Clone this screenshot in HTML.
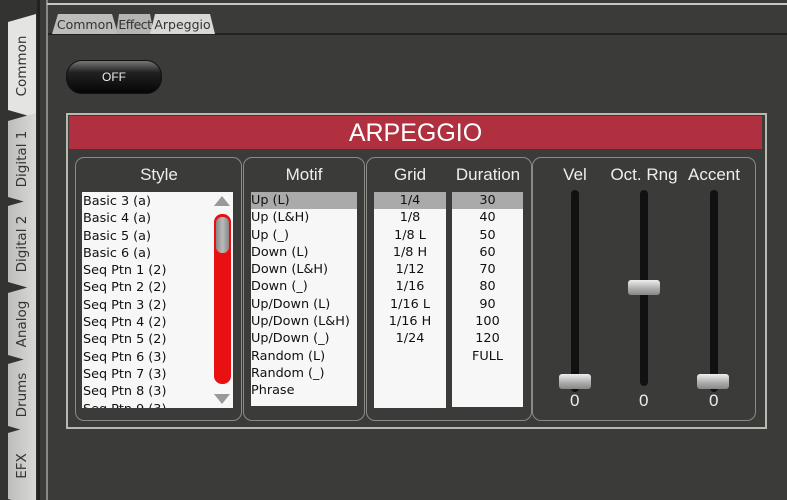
<!DOCTYPE html>
<html style="width:787px;height:500px;overflow:hidden"><head><style>
body{margin:0;width:787px;height:500px;background:#3b3b39;position:relative;overflow:hidden;font-family:"DejaVu Sans","Liberation Sans",sans-serif}
.a{position:absolute}
.vt{position:absolute;left:8px;width:28px;background:linear-gradient(90deg,#bdbdbb,#d8d8d6);border-radius:8px 0 0 8px;clip-path:polygon(0 8px,100% 0,100% 100%,0 calc(100% - 8px))}
.vt span{position:absolute;left:50%;top:50%;transform:translate(-50%,-50%) rotate(-90deg);font-size:13.5px;color:#333;white-space:nowrap}
.panel{position:absolute;border:1.5px solid #8a8a86;border-radius:9px;top:157px;height:262px}
.h{position:absolute;color:#eee;font-family:"Liberation Sans",sans-serif;font-size:17px;text-align:center}
.list{position:absolute;background:#f7f7f7;font-size:12.8px;line-height:17.3px;color:#111;overflow:hidden}
.sel{background:#aaa}
.track{position:absolute;width:8px;background:#111;border-radius:4px;top:190px;height:202px}
.knob{position:absolute;width:32px;height:15px;border-radius:3px;background:linear-gradient(#eee,#aaa 60%,#888);}
.val{position:absolute;color:#eee;font-size:17px;font-family:"Liberation Sans",sans-serif;top:391px}
.tt{position:absolute;top:14px;height:20px;font-size:12.5px;color:#333;text-align:center;line-height:22px}
</style></head><body>
<div class="a" style="left:0;top:0;width:40px;height:500px;background:#333331"></div>
<div class="vt" style="top:14px;height:104px;background:#e4e4e2"><span>Common</span></div>
<div class="vt" style="top:113px;height:92px"><span>Digital 1</span></div>
<div class="vt" style="top:198px;height:92px"><span>Digital 2</span></div>
<div class="vt" style="top:285px;height:78px"><span>Analog</span></div>
<div class="vt" style="top:356px;height:78px"><span>Drums</span></div>
<div class="vt" style="top:425px;height:82px"><span>EFX</span></div>
<div class="a" style="left:37px;top:0;width:3px;height:500px;background:#222"></div>
<div class="a" style="left:46px;top:0;width:2px;height:500px;background:#8a8a85"></div>
<div class="a" style="left:47px;top:3px;width:740px;height:2px;background:#c8c8c0"></div>
<div class="a" style="left:48px;top:33px;width:739px;height:2px;background:#222"></div>
<div class="tt" style="left:52px;width:66px;background:#bdbdbb;clip-path:polygon(6px 0,calc(100% - 6px) 0,100% 100%,0 100%)">Common</div>
<div class="tt" style="left:116px;width:38px;background:#b5b5b3;clip-path:polygon(3px 0,calc(100% - 4px) 0,100% 100%,0 100%);letter-spacing:-0.5px">Effect</div>
<div class="tt" style="left:150px;width:65px;background:#d8d8d6;clip-path:polygon(5px 0,calc(100% - 5px) 0,100% 100%,0 100%)">Arpeggio</div>
<div class="a" style="left:66px;top:60px;width:94px;height:32px;border-radius:16px;background:linear-gradient(#777 0,#222 35%,#050505);border:1px solid #111;color:#eee;font-size:12px;text-align:center;line-height:32px;font-family:'Liberation Sans',sans-serif">OFF</div>
<div class="a" style="left:66px;top:113px;width:697px;height:312px;border:2px solid #b8b8b0"></div>
<div class="a" style="left:69px;top:116px;width:693px;height:33px;background:#b03040;color:#fff;font-family:'Liberation Sans',sans-serif;font-size:25px;text-align:center;line-height:34px">ARPEGGIO</div>
<div class="panel" style="left:75px;width:165px"></div>
<div class="h" style="left:75px;width:168px;top:165px">Style</div>
<div class="list" style="left:82px;top:192px;width:150px;height:216px;padding-left:1px"><div style="margin-top:1px">Basic 3 (a)<br>Basic 4 (a)<br>Basic 5 (a)<br>Basic 6 (a)<br>Seq Ptn 1 (2)<br>Seq Ptn 2 (2)<br>Seq Ptn 3 (2)<br>Seq Ptn 4 (2)<br>Seq Ptn 5 (2)<br>Seq Ptn 6 (3)<br>Seq Ptn 7 (3)<br>Seq Ptn 8 (3)<br>Seq Ptn 9 (3)</div></div>
<div class="a" style="left:214px;top:196px;width:0;height:0;border-left:8px solid transparent;border-right:8px solid transparent;border-bottom:10px solid #999"></div>
<div class="a" style="left:214px;top:394px;width:0;height:0;border-left:8px solid transparent;border-right:8px solid transparent;border-top:10px solid #999"></div>
<div class="a" style="left:214px;top:214px;width:17px;height:170px;border-radius:8px;background:#e81010"></div>
<div class="a" style="left:216px;top:217px;width:13px;height:36px;border-radius:6px;background:linear-gradient(90deg,#888,#bbb,#888)"></div>
<div class="panel" style="left:243px;width:120px"></div>
<div class="h" style="left:243px;width:122px;top:165px">Motif</div>
<div class="list" style="left:251px;top:192px;width:106px;height:214px"><div class="sel">Up (L)</div>Up (L&amp;H)<br>Up (_)<br>Down (L)<br>Down (L&amp;H)<br>Down (_)<br>Up/Down (L)<br>Up/Down (L&amp;H)<br>Up/Down (_)<br>Random (L)<br>Random (_)<br>Phrase</div>
<div class="panel" style="left:366px;width:164px"></div>
<div class="h" style="left:374px;width:72px;top:165px">Grid</div>
<div class="h" style="left:451px;width:74px;top:165px">Duration</div>
<div class="list" style="left:374px;top:192px;width:72px;height:216px;text-align:center"><div class="sel">1/4</div>1/8<br>1/8 L<br>1/8 H<br>1/12<br>1/16<br>1/16 L<br>1/16 H<br>1/24</div>
<div class="list" style="left:452px;top:192px;width:71px;height:215px;text-align:center"><div class="sel">30</div>40<br>50<br>60<br>70<br>80<br>90<br>100<br>120<br>FULL</div>
<div class="panel" style="left:532px;width:222px"></div>
<div class="h" style="left:545px;width:60px;top:165px">Vel</div>
<div class="h" style="left:604px;width:80px;top:165px">Oct. Rng</div>
<div class="h" style="left:684px;width:60px;top:165px">Accent</div>
<div class="track" style="left:571px"></div>
<div class="track" style="left:640px;height:196px"></div>
<div class="track" style="left:710px"></div>
<div class="knob" style="left:559px;top:374px"></div>
<div class="knob" style="left:628px;top:280px"></div>
<div class="knob" style="left:697px;top:374px"></div>
<div class="val" style="left:570px">0</div>
<div class="val" style="left:639px">0</div>
<div class="val" style="left:709px">0</div>
</body></html>
